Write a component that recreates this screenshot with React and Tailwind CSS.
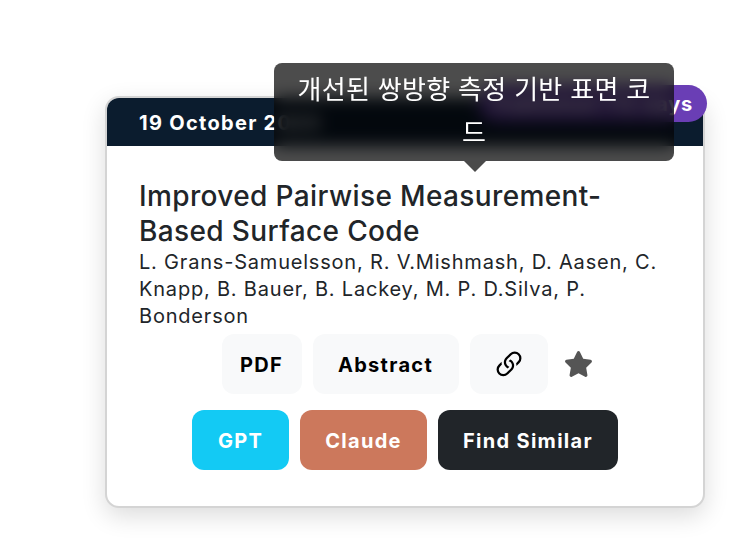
import React from "react";
import { FaStar } from "react-icons/fa";

function Btn({ className = "", children }) {
  return (
    <button className={`h-[60px] rounded-[12px] text-[20px] font-bold tracking-[1.3px] pt-[1px] flex items-center justify-center ${className}`}>
      {children}
    </button>
  );
}

export default function App() {
  return (
    <div className="w-[742px] h-[538px] bg-white pt-[96px] pl-[105px] font-['Inter','Noto_Sans_CJK_KR',sans-serif]">
      <div className="relative w-[600px] h-[412px] rounded-[14px] bg-white border-2 border-[#d4d4d4] shadow-[0_8px_24px_rgba(0,0,0,0.14)]">
        <div className="h-[48px] bg-[#0b1c2e] rounded-t-[12px] px-[32px] flex items-center text-white font-bold text-[20px] tracking-[1.3px] pt-[1px]">
          19 October 2023
        </div>
        <div className="absolute right-[-4px] top-[-13px] h-[37px] rounded-full bg-[#6a3eb5] text-white font-bold text-[20px] px-[14px] flex items-center tracking-[0.8px]">
          Published 712 days
        </div>
        <div className="absolute left-[167px] top-[-35px] w-[400px] h-[98px] rounded-[8px] bg-black/70 backdrop-blur-[8px] text-white text-[26px] leading-[43px] text-center px-[16px] py-[5px] tracking-[0.3px]">
          개선된 쌍방향 측정 기반 표면 코드
          <div className="absolute left-[190px] top-[98px] w-0 h-0 border-x-[11px] border-x-transparent border-t-[11px] border-t-[#4a4a4a]"></div>
        </div>
        <div className="px-[32px] pt-[33px]">
          <h2 className="text-[28px] leading-[35px] font-medium text-[#212529] tracking-[0.37px]">
            Improved Pairwise Measurement-Based Surface Code
          </h2>
          <p className="text-[20px] leading-[27px] text-[#212529] tracking-[0.8px]">
            L. Grans-Samuelsson, R. V.Mishmash, D. Aasen, C. Knapp, B. Bauer, B. Lackey, M. P. D.Silva, P. Bonderson
          </p>
        </div>
        <div className="mt-[4px] pl-[5px] flex justify-center items-center gap-[11px] text-black">
          <Btn className="w-[80px] bg-[#f8f9fa]">PDF</Btn>
          <Btn className="w-[146px] bg-[#f8f9fa]">Abstract</Btn>
          <Btn className="w-[78px] bg-[#f8f9fa]">
            <svg width="36" height="36" viewBox="0 0 16 16" fill="currentColor">
              <path d="M4.715 6.542 3.343 7.914a3 3 0 1 0 4.243 4.243l1.828-1.829A3 3 0 0 0 8.586 5.5L8 6.086a1.002 1.002 0 0 0-.154.199 2 2 0 0 1 .861 3.337L6.88 11.45a2 2 0 1 1-2.83-2.83l.793-.792a4.018 4.018 0 0 1-.128-1.287z" />
              <path d="M6.586 4.672A3 3 0 0 0 7.414 9.5l.775-.776a2 2 0 0 1-.896-3.346L9.12 3.55a2 2 0 1 1 2.83 2.83l-.793.792c.112.42.155.855.128 1.287l1.372-1.372a3 3 0 1 0-4.243-4.243L6.586 4.672z" />
            </svg>
          </Btn>
          <span className="ml-[5px] mr-[1px] text-[#555555]"><FaStar size={28} className="block w-[29px]" /></span>
        </div>
        <div className="mt-[16px] flex justify-center gap-[11px] text-white">
          <Btn className="w-[97px] bg-[#13caf4]">GPT</Btn>
          <Btn className="w-[127px] bg-[#cc785c]">Claude</Btn>
          <Btn className="w-[180px] bg-[#212529]">Find Similar</Btn>
        </div>
      </div>
    </div>
  );
}
